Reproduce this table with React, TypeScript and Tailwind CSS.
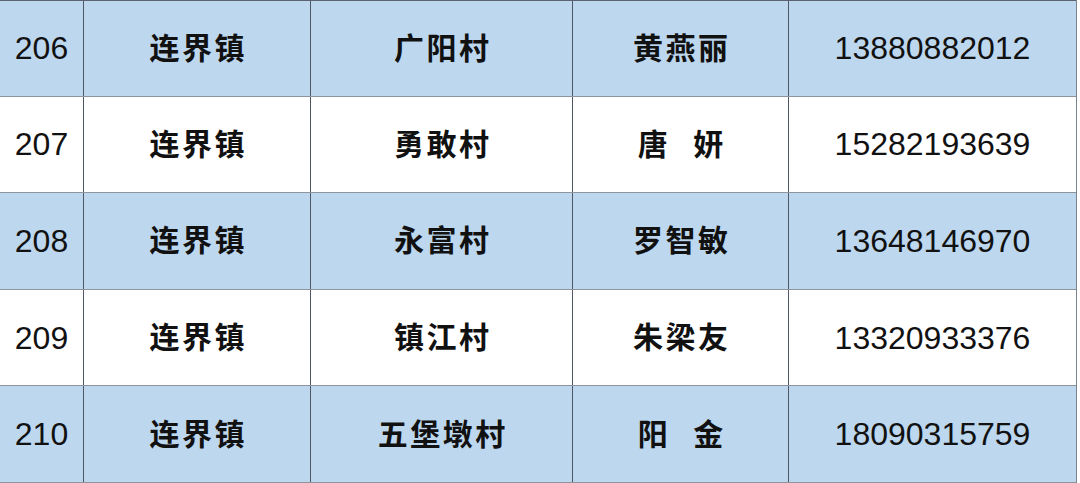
import React from "react";

const rows = [
  { n: "206", town: "连界镇", village: "广阳村", name: ["黄燕丽"], phone: "13880882012" },
  { n: "207", town: "连界镇", village: "勇敢村", name: ["唐", "妍"], phone: "15282193639" },
  { n: "208", town: "连界镇", village: "永富村", name: ["罗智敏"], phone: "13648146970" },
  { n: "209", town: "连界镇", village: "镇江村", name: ["朱梁友"], phone: "13320933376" },
  { n: "210", town: "连界镇", village: "五堡墩村", name: ["阳", "金"], phone: "18090315759" },
];

const cjk = { fontFamily: '"Liberation Sans", "Noto Sans CJK SC", sans-serif' };

export default function App() {
  return (
    <div className="w-[1080px] h-[483px] bg-white overflow-hidden">
      <div className="w-[1077px] border-r border-[#7d838c] text-[#111]" style={cjk}>
        {rows.map((r, i) => (
          <div
            key={r.n}
            className={`grid grid-cols-[84px_227px_262px_216px_1fr] h-[96.6px] border-b ${
              i % 2 === 0 ? "bg-[#bdd7ee]" : "bg-white"
            } ${i === 0 ? "border-t border-t-[#5b6370]" : ""} border-b-[#8e949b]`}
          >
            <div className="flex items-center justify-center border-r border-[#4f5763] text-[32px]">{r.n}</div>
            <div className="flex items-center justify-center border-r border-[#4f5763] text-[30px] font-bold tracking-[2.5px] pl-[2.5px]">{r.town}</div>
            <div className="flex items-center justify-center border-r border-[#4f5763] text-[30px] font-bold tracking-[2.5px] pl-[2.5px]">{r.village}</div>
            <div className="flex items-center justify-center gap-[23px] border-r border-[#4f5763] text-[30px] font-bold tracking-[2.5px] pl-[2.5px]">
              {r.name.map((c) => (
                <span key={c}>{c}</span>
              ))}
            </div>
            <div className="flex items-center justify-center text-[32px]">{r.phone}</div>
          </div>
        ))}
      </div>
    </div>
  );
}
